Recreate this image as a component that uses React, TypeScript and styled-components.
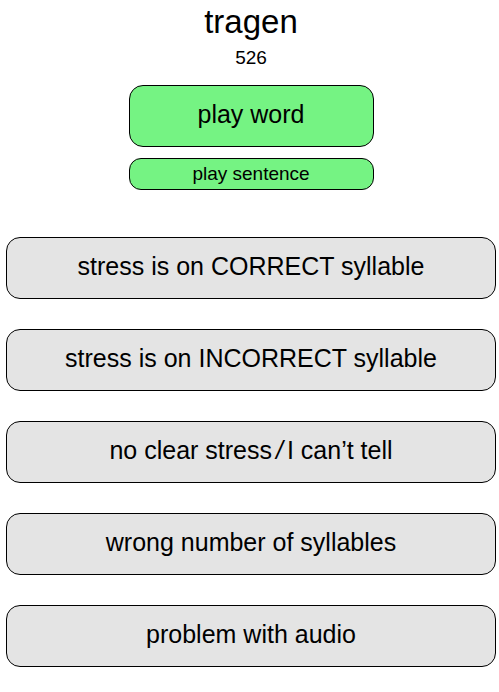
import React from "react";
import styled, { createGlobalStyle } from "styled-components";

const GlobalStyle = createGlobalStyle`
  * { box-sizing: border-box; }
  body {
    margin: 0;
    background: #fff;
    color: #000;
    font-family: "Liberation Sans", Arial, sans-serif;
  }
`;

const Page = styled.main`
  display: flex;
  flex-direction: column;
  padding: 4px 3px 24px 6px;
`;

const Header = styled.header`
  display: flex;
  flex-direction: column;
  align-items: center;
`;

const Word = styled.h1`
  margin: 0;
  font-size: 33px;
  font-weight: 400;
  line-height: 36px;
`;

const Count = styled.p`
  margin: 7px 0 16px;
  font-size: 19px;
  line-height: 22px;
`;

const Button = styled.button<{ $compact?: boolean }>`
  width: 100%;
  height: ${(p) => (p.$compact ? 32 : 62)}px;
  padding: 0 8px ${(p) => (p.$compact ? 0 : 3)}px;
  border: 1px solid #000;
  border-radius: ${(p) => (p.$compact ? 12 : 14)}px;
  color: inherit;
  font-family: inherit;
  font-size: ${(p) => (p.$compact ? 19 : 25)}px;
  cursor: pointer;
`;

const PlayButton = styled(Button)`
  background: #75f383;
`;

const AnswerButton = styled(Button)`
  background: #e4e4e4;
`;

const Players = styled.div`
  display: flex;
  flex-direction: column;
  gap: 11px;
  width: 50%;
`;

const Answers = styled.section`
  display: flex;
  flex-direction: column;
  gap: 30px;
  margin-top: 47px;
`;

const Slash = styled.span`
  margin: 0 4px;
  font-style: italic;
`;

const answers = [
  { id: "correct", label: "stress is on CORRECT syllable" },
  { id: "incorrect", label: "stress is on INCORRECT syllable" },
  { id: "unclear", label: <>no clear stress<Slash>/</Slash>I can’t tell</> },
  { id: "count", label: "wrong number of syllables" },
  { id: "audio", label: "problem with audio" },
];

export default function App() {
  return (
    <>
      <GlobalStyle />
      <Page>
        <Header>
          <Word>tragen</Word>
          <Count>526</Count>
          <Players>
            <PlayButton type="button">play word</PlayButton>
            <PlayButton type="button" $compact>play sentence</PlayButton>
          </Players>
        </Header>
        <Answers aria-label="Answers">
          {answers.map(({ id, label }) => (
            <AnswerButton key={id} type="button">{label}</AnswerButton>
          ))}
        </Answers>
      </Page>
    </>
  );
}
